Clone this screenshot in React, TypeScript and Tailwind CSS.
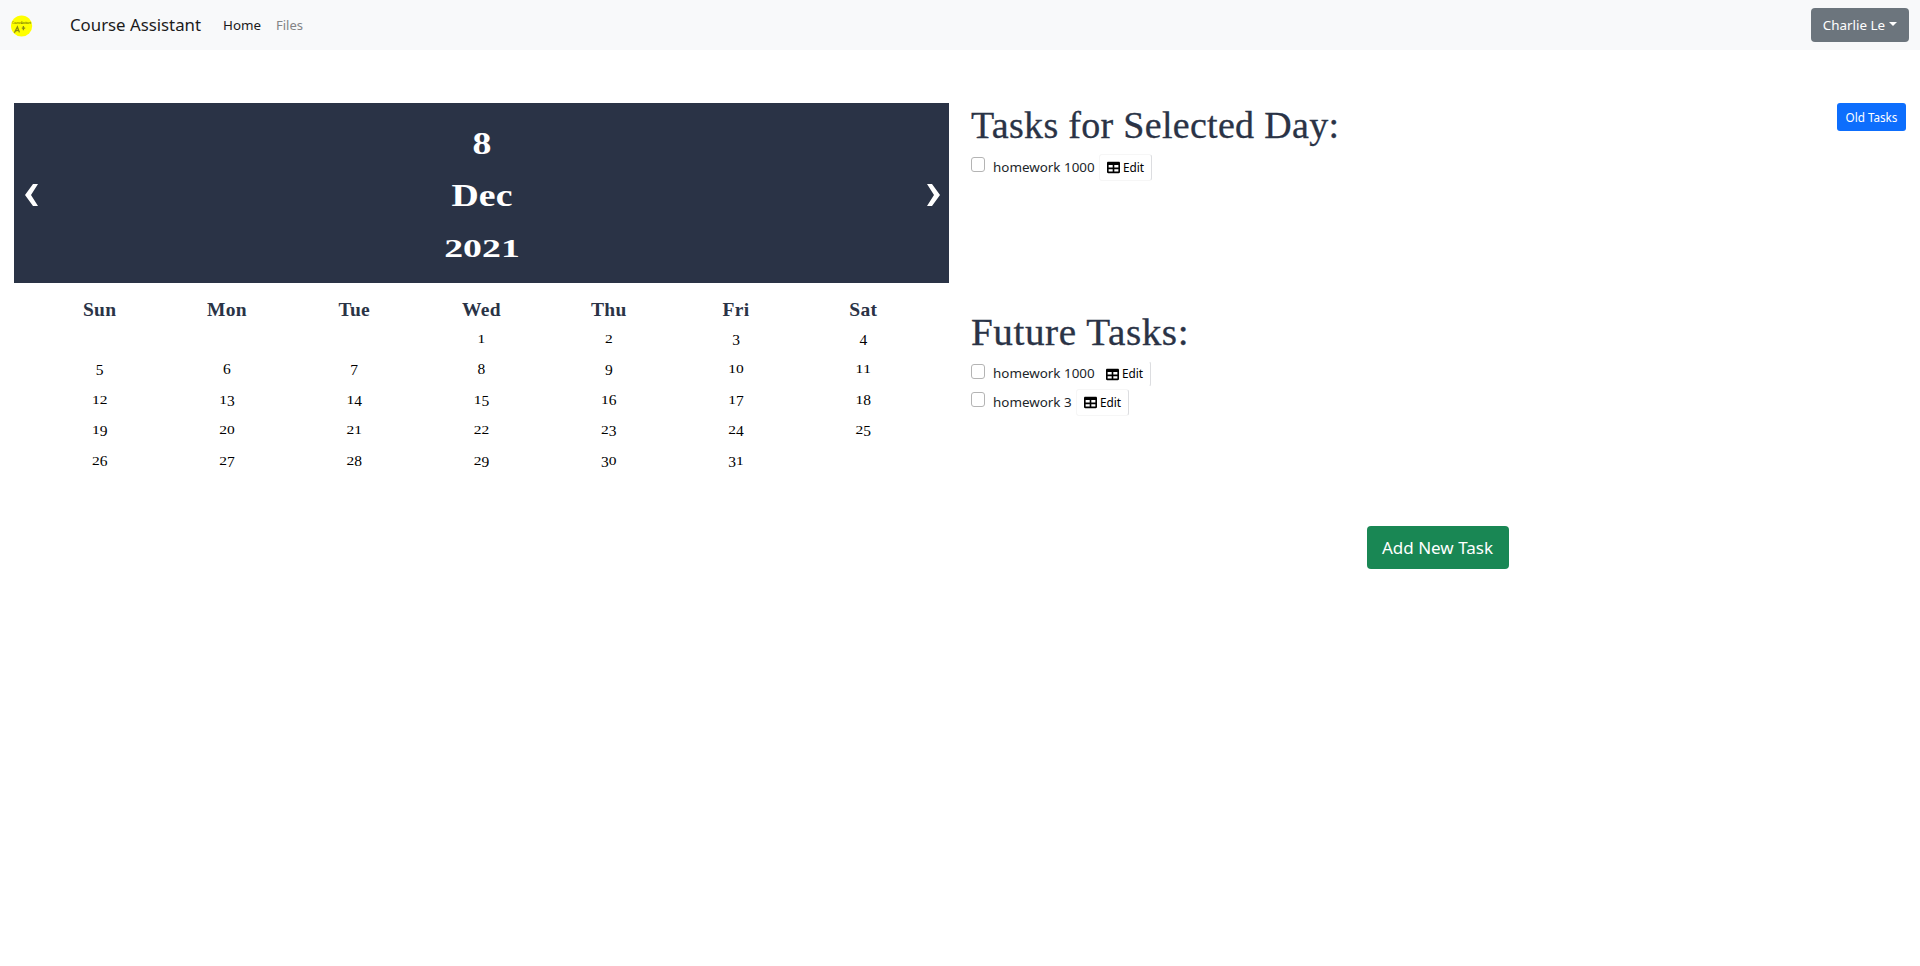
import { FaTable } from 'react-icons/fa';

const WEEKDAYS = ['Sun', 'Mon', 'Tue', 'Wed', 'Thu', 'Fri', 'Sat'];
const FIRST_WEEKDAY = 3;
const DAYS = Array.from({ length: 31 }, (_, i) => i + 1);

/* Old-style figures: 0-2 sit at x-height, 3 4 5 7 9 hang below the baseline. */
function OldStyle({ value }: { value: string }) {
  return (
    <>
      {value.split('').map((d, i) => {
        if ('012'.includes(d)) {
          return (
            <span key={i} className="inline-block origin-[50%_94%] scale-y-[0.76] leading-none">
              {d}
            </span>
          );
        }
        if ('34579'.includes(d)) {
          return (
            <span key={i} className="inline-block translate-y-[0.15em] leading-none">
              {d}
            </span>
          );
        }
        return (
          <span key={i} className="inline-block translate-y-[0.04em] leading-none">
            {d}
          </span>
        );
      })}
    </>
  );
}

function Logo() {
  return (
    <svg width="22" height="22" viewBox="0 0 22 22" className="mt-[2px]">
      <circle cx="10.6" cy="11" r="10.6" fill="#ffff00" />
      <text x="10.6" y="9.4" fontSize="3" textAnchor="middle" fill="#5c5c00" textLength="19" fontFamily="Noto Sans, sans-serif">
        Course Assistant
      </text>
      <path d="M3.4 17.8 6.4 11.8 8.4 17.4M4.6 15.8 8 15.2M12.4 11V15.2M10.8 13.2H14.2" fill="none" stroke="#8a8a14" strokeWidth="1.3" />
    </svg>
  );
}

function Chevron({ points }: { points: string }) {
  return (
    <button className="mt-[4px] block">
      <svg width="15" height="22" viewBox="0 0 15 22" fill="#fff">
        <polygon points={points} />
      </svg>
    </button>
  );
}

function Task({ name, className, box, nameWidth, edit }: { name: string; className: string; box: string; nameWidth: string; edit: string }) {
  return (
    <li className={`flex items-center ${className}`}>
      <span className={`h-[15px] w-[14px] shrink-0 rounded-[3px] border border-[#b4b4b4] bg-white ${box}`} />
      <span className={`ml-2 shrink-0 whitespace-nowrap text-[13.4px] leading-none ${nameWidth}`}>{name}</span>
      <button className={`flex h-full w-[53px] items-center justify-center gap-[3px] rounded-[3px] border text-[11.8px] leading-none text-black ${edit}`}>
        <FaTable className="size-[13px]" />
        Edit
      </button>
    </li>
  );
}

export default function App() {
  return (
    <div className="min-h-[966px] bg-white font-['Noto_Sans',sans-serif] text-[#212529]">
      <nav className="flex h-[50px] items-center bg-[#f8f9fa] pr-[11px] pl-[11px]">
        <Logo />
        <span className="mt-px ml-[37px] w-[153px] whitespace-nowrap text-[16.8px] leading-none text-[#1b1b1b]">Course Assistant</span>
        <a className="mt-px w-[53px] text-[13.4px] leading-none text-[#1b1b1b]">Home</a>
        <a className="mt-px text-[13px] leading-none text-[#838485]">Files</a>
        <button className="ml-auto flex h-[34px] w-[98px] items-center justify-center gap-1 rounded-[4px] bg-[#6c757d] text-[13.4px] leading-none text-white">
          <span className="mt-px whitespace-nowrap">Charlie Le</span>
          <svg width="8" height="4" viewBox="0 0 8 4" className="-mt-[3px]" fill="#fff">
            <polygon points="0,0 8,0 4,4" />
          </svg>
        </button>
      </nav>

      <main className="flex pt-[53px] pr-[14px] pl-[14px]">
        <section className="w-[935px] font-['Liberation_Serif',serif]">
          <header className="flex h-[180px] items-center justify-between bg-[#2a3346] pr-[8px] pl-[10px]">
            <Chevron points="9,0 14,0 7,11 14,22 9,22 1,11" />
            <div className="mt-[5px] mr-[2px] scale-x-[1.18] text-center text-[32px] font-bold text-white">
              <div className="h-[51.5px] leading-[51.5px]">8</div>
              <div className="h-[51.5px] leading-[51.5px]">Dec</div>
              <div className="h-[51.5px] leading-[48px]">
                <OldStyle value="2021" />
              </div>
            </div>
            <Chevron points="1,0 6,0 14,11 6,22 1,22 8,11" />
          </header>

          <div className="mx-[22px] grid grid-cols-7 pt-[13px] text-center">
            {WEEKDAYS.map((d) => (
              <div key={d} className="h-[27px] text-[19.5px] leading-[27px] font-bold tracking-[0.3px] text-[#2a3346]">
                {d}
              </div>
            ))}
            {Array.from({ length: FIRST_WEEKDAY }, (_, i) => (
              <div key={`blank-${i}`} />
            ))}
            {DAYS.map((d) => (
              <div key={d} className="h-[30.4px] text-[15.5px] leading-[30.4px] text-black">
                <OldStyle value={String(d)} />
              </div>
            ))}
          </div>
        </section>

        <section className="ml-[22px] flex-1">
          <div className="flex h-[51px] items-start justify-between">
            <h1 className="font-['Liberation_Serif',serif] text-[38px] leading-[44px] tracking-[0.3px] text-[#2a3346] [-webkit-text-stroke:0.3px_#2a3346]">
              Tasks for Selected Day:
            </h1>
            <button className="h-[28px] w-[69px] rounded-[3px] bg-[#0d6efd] pt-px text-[11.7px] leading-none text-white">Old Tasks</button>
          </div>
          <ul className="h-[156px]">
            <Task
              name="homework 1000"
              className="h-[27px]"
              box="-mt-[6px]"
              nameWidth="w-[106px]"
              edit="border-[#f6f6f6] border-r-[#dcdde0]"
            />
          </ul>

          <h1 className="h-[51px] origin-left scale-x-[1.03] font-['Liberation_Serif',serif] text-[38px] leading-[45px] tracking-[0.55px] text-[#2a3346] [-webkit-text-stroke:0.3px_#2a3346]">
            Future Tasks:
          </h1>
          <ul className="h-[165px]">
            <Task
              name="homework 1000"
              className="mb-[2px] h-[26px]"
              box="-mt-[5px]"
              nameWidth="w-[105px]"
              edit="border-transparent border-r-[#dcdde0]"
            />
            <Task
              name="homework 3"
              className="h-[27px]"
              box="-mt-[6px]"
              nameWidth="w-[83px]"
              edit="border-[#f6f6f6] border-r-[#dcdde0]"
            />
          </ul>

          <div className="flex justify-center pr-[2px]">
            <button className="h-[43px] w-[142px] rounded-[4px] bg-[#198754] text-[17px] leading-none whitespace-nowrap text-white">
              Add New Task
            </button>
          </div>
        </section>
      </main>
    </div>
  );
}
